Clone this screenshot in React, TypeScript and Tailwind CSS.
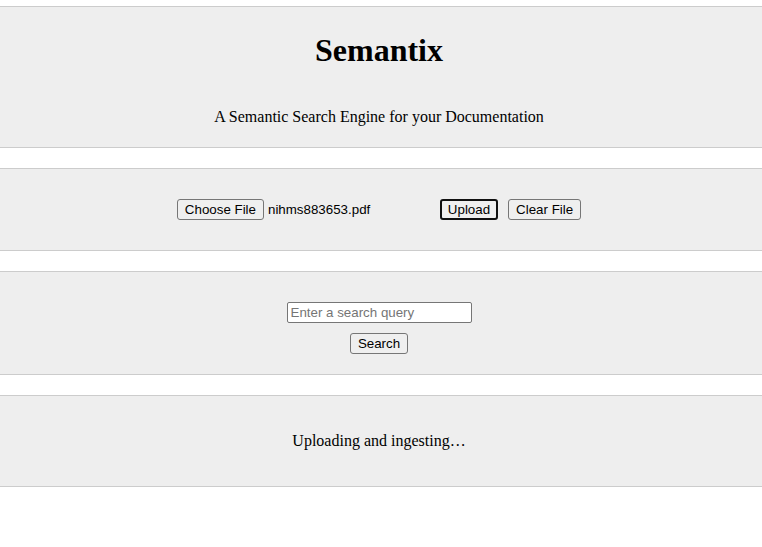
export default function App() {
  const serif = { fontFamily: '"Liberation Serif", "Times New Roman", serif' };
  const btn =
    'inline-block bg-[#efefef] border border-[#767676] rounded-[3px] px-[7px] py-px text-[13.33px] leading-[17px] text-black';

  return (
    <div className="min-h-[547px] bg-white pt-[6px] text-black" style={serif}>
      {/* Header */}
      <section className="bg-[#eeeeee] border-y border-[#cccccc] pt-[25px] pb-[21px] pr-1 text-center">
        <h1 className="text-[32px] font-bold leading-[36px]">Semantix</h1>
        <p className="mt-[40px] text-[16px] leading-[18px]">
          A Semantic Search Engine for your Documentation
        </p>
      </section>

      {/* Upload */}
      <section
        className="mt-5 bg-[#eeeeee] border-y border-[#cccccc] py-[30px] pr-1 flex justify-center items-center"
        style={{ fontFamily: '"Liberation Sans", Arial, sans-serif' }}
      >
        <div className="w-[253px] flex items-center">
          <span className={btn}>Choose File</span>
          <span className="ml-1 text-[13.33px] leading-[17px]">nihms883653.pdf</span>
        </div>
        <button className="ml-[10px] bg-[#efefef] border-2 border-[#101010] rounded-[3px] px-[6px] py-0 text-[13.33px] leading-[17px]">
          Upload
        </button>
        <button className={`ml-[10px] ${btn}`}>Clear File</button>
      </section>

      {/* Search */}
      <section
        className="mt-5 bg-[#eeeeee] border-y border-[#cccccc] pt-[30px] pb-5 pr-1 flex flex-col items-center"
        style={{ fontFamily: '"Liberation Sans", Arial, sans-serif' }}
      >
        <input
          type="text"
          placeholder="Enter a search query"
          className="w-[185px] h-[21px] bg-white border border-[#767676] rounded-[2px] px-[3px] text-[13.33px] leading-[17px] placeholder:text-[#757575] outline-none"
        />
        <button className={`mt-[10px] ${btn}`}>Search</button>
      </section>

      {/* Status */}
      <section className="mt-5 bg-[#eeeeee] border-y border-[#cccccc] py-[36px] pr-1 text-center">
        <p className="text-[16px] leading-[18px]">Uploading and ingesting…</p>
      </section>
    </div>
  );
}
